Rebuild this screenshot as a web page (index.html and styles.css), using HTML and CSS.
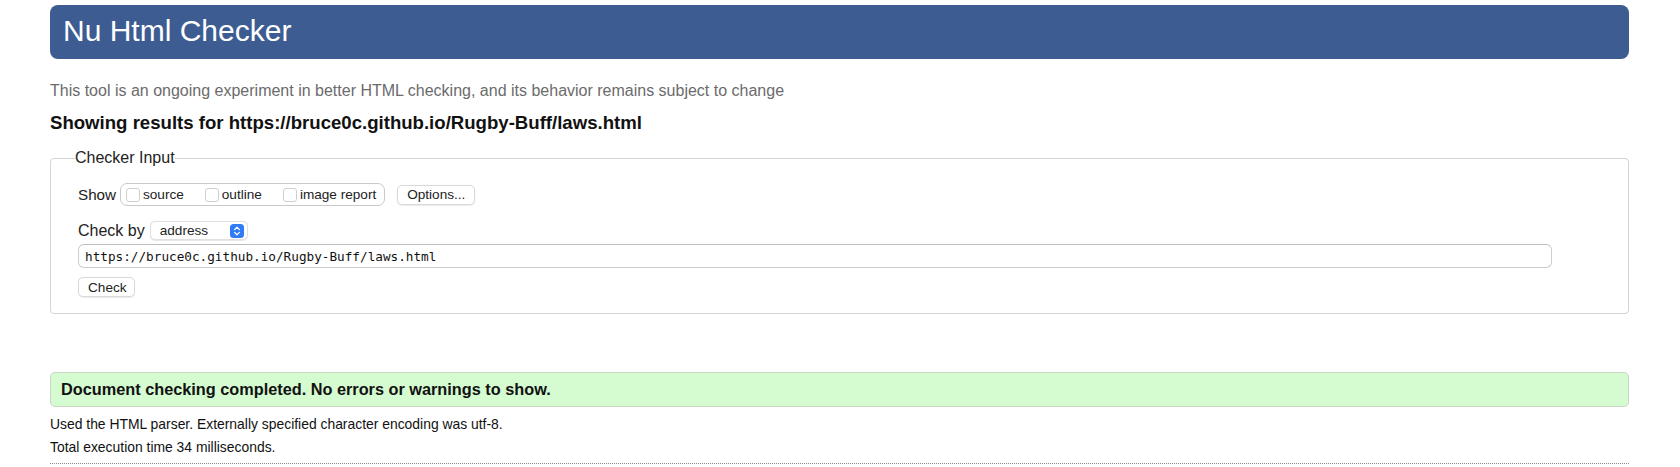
FILE: index.html
```html
<!DOCTYPE html>
<html lang="en">
<head>
<meta charset="utf-8">
<title>Showing results for https://bruce0c.github.io/Rugby-Buff/laws.html - Nu Html Checker</title>
<link rel="stylesheet" href="styles.css">
</head>
<body>
<h1 class="banner">Nu Html Checker</h1>
<p class="intro">This tool is an ongoing experiment in better HTML checking, and its behavior remains subject to change</p>
<h2 class="results-title">Showing results for https://bruce0c.github.io/Rugby-Buff/laws.html</h2>
<form class="checker-form">
  <fieldset class="checker-input">
    <legend class="legend">Checker Input</legend>
    <div class="row show-row">
      <span class="label label-show">Show</span>
      <span class="show-group">
        <span class="opt"><span class="cb"></span><span class="opt-text">source</span></span>
        <span class="opt"><span class="cb"></span><span class="opt-text">outline</span></span>
        <span class="opt"><span class="cb"></span><span class="opt-text">image report</span></span>
      </span>
      <span class="btn options-btn">Options...</span>
    </div>
    <div class="row checkby-row">
      <span class="label">Check by</span>
      <span class="select">
        <span class="select-text">address</span>
        <span class="select-icon">
          <svg width="14" height="14" viewBox="0 0 14 14" aria-hidden="true">
            <rect x="0" y="0" width="14" height="14" rx="3.5" fill="#2f7cf6"/>
            <path d="M4.6 5.6 L7 3.3 L9.4 5.6" fill="none" stroke="#fff" stroke-width="1.3" stroke-linecap="round" stroke-linejoin="round"/>
            <path d="M4.6 8.4 L7 10.7 L9.4 8.4" fill="none" stroke="#fff" stroke-width="1.3" stroke-linecap="round" stroke-linejoin="round"/>
          </svg>
        </span>
      </span>
    </div>
    <div class="row url-row">
      <span class="url-input">https://bruce0c.github.io/Rugby-Buff/laws.html</span>
    </div>
    <div class="row submit-row">
      <span class="btn check-btn">Check</span>
    </div>
  </fieldset>
</form>
<p class="success">Document checking completed. No errors or warnings to show.</p>
<p class="details">Used the HTML parser. Externally specified character encoding was utf-8.</p>
<p class="details">Total execution time 34 milliseconds.</p>
<div class="footer-rule"></div>
</body>
</html>
```

FILE: styles.css
```css
html, body {
  background: #ffffff;
}
body {
  margin: 0;
  padding: 0 51px 0 50px;
  font-family: "Liberation Sans", Arial, Helvetica, sans-serif;
  color: #111;
}
.banner {
  margin: 5px 0 0 0;
  height: 54px;
  box-sizing: border-box;
  display: flex;
  align-items: center;
  padding: 0 13px 2px 13px;
  background: #3d5c92;
  color: #ffffff;
  border-radius: 8px;
  font-size: 30px;
  font-weight: normal;
}
.intro {
  margin: 22px 0 0 0;
  line-height: 20px;
  font-size: 16px;
  color: #6b6b6b;
}
.results-title {
  margin: 11px 0 0 0;
  line-height: 22px;
  font-size: 18.6px;
  font-weight: bold;
  color: #111;
}
.checker-form {
  margin: 15px 0 0 0;
}
.checker-input {
  margin: 0;
  padding: 0 26px 16px 27px;
  border: 1px solid #d4d4d4;
  border-radius: 4px;
  min-width: 0;
}
.legend {
  margin-left: -3px;
  padding: 0;
  font-size: 16px;
  line-height: 18px;
  color: #222;
}
.row {
  display: flex;
  align-items: center;
}
.label {
  font-size: 16px;
  color: #222;
}
.label-show {
  font-size: 15.2px;
}
.show-row {
  margin-top: 16px;
  height: 23px;
}
.show-group {
  margin-left: 4px;
  height: 23px;
  box-sizing: border-box;
  display: flex;
  align-items: center;
  padding: 0 8px 0 5px;
  border: 1px solid #c9c9c9;
  border-radius: 7px;
  gap: 21px;
}
.opt {
  display: flex;
  align-items: center;
  gap: 3px;
}
.cb {
  width: 14px;
  height: 14px;
  box-sizing: border-box;
  border: 1px solid #cfcfcf;
  border-radius: 3px;
  background: #fff;
}
.opt-text {
  font-size: 13.6px;
  color: #222;
}
.btn {
  display: inline-flex;
  align-items: center;
  box-sizing: border-box;
  height: 20px;
  border: 1px solid #d9d9d9;
  border-radius: 5px;
  background: #fff;
  font-size: 13.6px;
  color: #222;
  box-shadow: 0 0.5px 1px rgba(0, 0, 0, 0.08);
}
.options-btn {
  margin-left: 12px;
  width: 78px;
  padding: 0 9px;
}
.checkby-row {
  margin-top: 15px;
  height: 19px;
}
.select {
  margin-left: 5px;
  width: 98px;
  height: 19px;
  box-sizing: border-box;
  display: flex;
  align-items: center;
  justify-content: space-between;
  padding: 0 3px 0 9px;
  border: 1px solid #e0e0e0;
  border-radius: 5px;
  background: #fff;
  box-shadow: 0 0.5px 1px rgba(0, 0, 0, 0.1);
}
.select-text {
  font-size: 13.6px;
  color: #222;
}
.select-icon {
  display: flex;
}
.url-row {
  margin-top: 4px;
}
.url-input {
  flex: 1;
  height: 24px;
  box-sizing: border-box;
  display: flex;
  align-items: center;
  padding: 0 6px;
  border: 1px solid #cdcdcd;
  border-top-color: #bdbdbd;
  border-radius: 6px;
  font-family: "DejaVu Sans Mono", "Liberation Mono", monospace;
  font-size: 12.7px;
  color: #111;
  margin-right: 50px;
}
.submit-row {
  margin-top: 9px;
}
.check-btn {
  width: 57px;
  padding: 0 9px;
}
.success {
  margin: 58px 0 0 0;
  height: 35px;
  box-sizing: border-box;
  display: flex;
  align-items: center;
  padding: 0 10px 1px 10px;
  background: #d5fbd0;
  border: 1px solid #c9d6c6;
  border-radius: 5px;
  font-size: 16.3px;
  font-weight: bold;
  color: #111;
}
.details {
  margin: 0;
  font-size: 13.9px;
  line-height: 23px;
  color: #111;
}
.success + .details {
  margin-top: 6px;
}
.footer-rule {
  margin-top: 4px;
  border-top: 1px dotted #8a8a8a;
}
```
